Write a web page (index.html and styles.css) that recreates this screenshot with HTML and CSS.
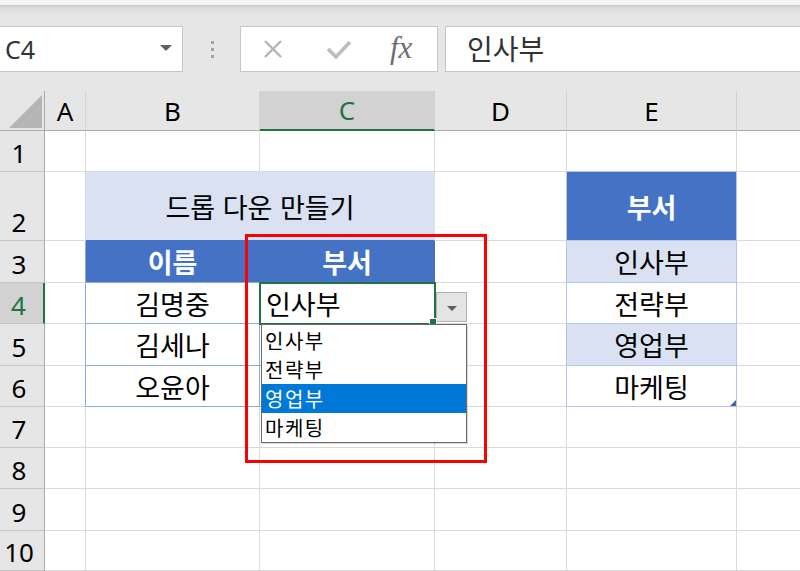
FILE: index.html
```html
<!DOCTYPE html>
<html lang="ko">
<head>
<meta charset="utf-8">
<title>드롭 다운 만들기</title>
<link rel="stylesheet" href="styles.css">
</head>
<body>
<div class="app">
  <div class="toolbar">
    <div class="namebox"><span class="name">C4</span><span class="caret"></span></div>
    <div class="grip"><i></i><i></i><i></i></div>
    <div class="btns">
      <svg class="ico-x" width="20" height="20" viewBox="0 0 20 20"><path d="M2 2 L18 18 M18 2 L2 18" stroke="#b4b4b4" stroke-width="2.4" fill="none"/></svg>
      <svg class="ico-ok" width="26" height="22" viewBox="0 0 26 22"><path d="M2 11 L10 19 L24 4" stroke="#bdbdbd" stroke-width="3.6" fill="none"/></svg>
      <span class="fx">fx</span>
    </div>
    <div class="formula">인사부</div>
  </div>

  <div class="sheet">
    <!-- header row -->
    <div class="corner"></div>
    <div class="hd">A</div>
    <div class="hd">B</div>
    <div class="hd sel">C</div>
    <div class="hd">D</div>
    <div class="hd">E</div>
    <div class="hd"></div>

    <!-- row 1 -->
    <div class="rh">1</div>
    <div class="c"></div>
    <div class="c"></div>
    <div class="c"></div>
    <div class="c"></div>
    <div class="c e-top"></div>
    <div class="c"></div>

    <!-- row 2 -->
    <div class="rh">2</div>
    <div class="c"></div>
    <div class="c title span2">드롭 다운 만들기</div>
    <div class="c e-left"></div>
    <div class="c ehead">부서</div>
    <div class="c"></div>

    <!-- row 3 -->
    <div class="rh">3</div>
    <div class="c b-left"></div>
    <div class="c thead tb-mid">이름</div>
    <div class="c thead">부서</div>
    <div class="c e-left"></div>
    <div class="c ecell band">인사부</div>
    <div class="c"></div>

    <!-- row 4 -->
    <div class="rh sel">4</div>
    <div class="c b-left"></div>
    <div class="c tcell">김명중</div>
    <div class="c tcell active">
      <span class="val">인사부</span>
      <div class="ddbtn"><span class="tri"></span></div>
      <ul class="ddlist">
        <li>인사부</li>
        <li>전략부</li>
        <li class="hi">영업부</li>
        <li>마케팅</li>
      </ul>
    </div>
    <div class="c e-left"></div>
    <div class="c ecell">전략부</div>
    <div class="c"></div>

    <!-- row 5 -->
    <div class="rh">5</div>
    <div class="c b-left"></div>
    <div class="c tcell">김세나</div>
    <div class="c tcell"></div>
    <div class="c e-left"></div>
    <div class="c ecell band">영업부</div>
    <div class="c"></div>

    <!-- row 6 -->
    <div class="rh">6</div>
    <div class="c b-left"></div>
    <div class="c tcell">오윤아</div>
    <div class="c tcell"></div>
    <div class="c e-left"></div>
    <div class="c ecell last">마케팅</div>
    <div class="c"></div>

    <!-- rows 7-10 -->
    <div class="rh">7</div>
    <div class="c"></div><div class="c"></div><div class="c"></div><div class="c"></div><div class="c"></div><div class="c"></div>
    <div class="rh">8</div>
    <div class="c"></div><div class="c"></div><div class="c"></div><div class="c"></div><div class="c"></div><div class="c"></div>
    <div class="rh">9</div>
    <div class="c"></div><div class="c"></div><div class="c"></div><div class="c"></div><div class="c"></div><div class="c"></div>
    <div class="rh">10</div>
    <div class="c"></div><div class="c"></div><div class="c"></div><div class="c"></div><div class="c"></div><div class="c"></div>

    <div class="redbox"></div>
  </div>
</div>
</body>
</html>
```

FILE: styles.css
```css
* { box-sizing: border-box; }
html, body { margin: 0; padding: 0; }
body {
  width: 800px;
  height: 571px;
  overflow: hidden;
  background: #ffffff;
  font-family: "Noto Sans", "Noto Sans CJK KR", sans-serif;
  color: #000;
}
.app { width: 800px; height: 571px; overflow: hidden; }

/* ---------- toolbar / formula bar ---------- */
.toolbar {
  height: 91px;
  display: flex;
  align-items: flex-start;
  padding-top: 26px;
  background: linear-gradient(#f4f4f4 0, #f4f4f4 5px, #cdcdcd 5px, #cdcdcd 6px, #d9d9d9 7px, #e6e6e6 15px, #e6e6e6 100%);
}
.namebox {
  width: 183px;
  height: 46px;
  background: #fff;
  border: 1px solid #c6c6c6;
  border-left: none;
  display: flex;
  align-items: center;
  justify-content: space-between;
  padding: 0 10px 0 5px;
}
.name {
  font-family: "Noto Sans", sans-serif;
  font-size: 25px;
  color: #333;
  line-height: 1;
}
.caret {
  width: 0; height: 0;
  border-left: 6px solid transparent;
  border-right: 6px solid transparent;
  border-top: 6px solid #606060;
  margin-top: -2px;
}
.grip {
  width: 57px;
  height: 46px;
  display: flex;
  flex-direction: column;
  align-items: center;
  justify-content: center;
  gap: 4px;
  padding-left: 1px;
}
.grip i {
  display: block;
  width: 3px; height: 3px;
  background: #a3a3a3;
}
.btns {
  width: 198px;
  height: 46px;
  background: #fff;
  border: 1px solid #c6c6c6;
  display: flex;
  align-items: center;
}
.ico-x { margin-left: 22px; }
.ico-ok { margin-left: 43px; }
.fx {
  margin-left: 38px;
  font-family: "Liberation Serif", serif;
  font-style: italic;
  font-size: 31px;
  color: #6e6e6e;
  line-height: 1;
  margin-top: -4px;
}
.formula {
  flex: 1;
  margin-left: 7px;
  height: 46px;
  background: #fff;
  border: 1px solid #c6c6c6;
  border-right: none;
  padding-left: 21px;
  font-family: "Noto Sans CJK KR", sans-serif;
  font-size: 28px;
  line-height: 42px;
  color: #333;
}

/* ---------- sheet grid ---------- */
.sheet {
  position: relative;
  display: grid;
  grid-template-columns: 45px 41px 174px 175px 132px 170px 136px;
  grid-template-rows: 40px 41px 69px 42px 41px 42px 41px 41px 41px 42px 40px;
}
.corner {
  background: #e6e6e6;
  border-right: 1px solid #ababab;
  border-bottom: 1px solid #ababab;
  position: relative;
}
.corner::after {
  content: "";
  position: absolute;
  left: 9px; top: 4px;
  width: 33px; height: 33px;
  background: #b5b5b5;
  clip-path: polygon(0 100%, 100% 100%, 100% 0);
}
.hd {
  background: #e6e6e6;
  border-right: 1px solid #d2d2d2;
  border-bottom: 1px solid #ababab;
  display: flex;
  align-items: center;
  justify-content: center;
  font-family: "Noto Sans", sans-serif;
  font-size: 26px;
  color: #000;
}
.hd.sel {
  background: #d2d2d2;
  color: #217346;
  border-bottom: 2px solid #217346;
}
.rh {
  background: #e6e6e6;
  border-right: 1px solid #ababab;
  border-bottom: 1px solid #c4c4c4;
  display: flex;
  align-items: flex-end;
  justify-content: center;
  padding: 0 6px 2px 0;
  font-family: "Noto Sans", sans-serif;
  font-size: 26px;
  line-height: 1.2;
  color: #000;
}
.rh.sel {
  background: #d2d2d2;
  color: #217346;
  border-right: 2px solid #217346;
}

.c {
  border-right: 1px solid #dadada;
  border-bottom: 1px solid #dadada;
  display: flex;
  align-items: center;
  justify-content: center;
  font-family: "Noto Sans CJK KR", sans-serif;
  font-size: 27px;
  color: #000;
  position: relative;
}
.span2 { grid-column: span 2; }
.title {
  background: #d9e1f2;
  border-right-color: #d9e1f2;
  border-bottom-color: #4472c4;
}
.thead {
  background: #4472c4;
  color: #fff;
  font-weight: 700;
  border-right-color: #4472c4;
  border-bottom-color: #8eaadb;
}
.tb-mid { border-right-color: #4472c4; }
.tcell {
  border-bottom-color: #8eaadb;
  border-right-color: #8eaadb;
}
.b-left { border-right-color: #8eaadb; }

.e-top { border-bottom-color: #b4c6e7; }
.e-left { border-right-color: #b4c6e7; }
.ehead {
  background: #4472c4;
  color: #fff;
  font-weight: 700;
  border-right-color: #b4c6e7;
  border-bottom-color: #b4c6e7;
}
.ecell {
  border-right-color: #b4c6e7;
  border-bottom-color: #b4c6e7;
}
.ecell.band { background: #d9e1f2; }
.ecell.last::after {
  content: "";
  position: absolute;
  right: 0; bottom: 0;
  width: 6px; height: 6px;
  background: #4262b8;
  clip-path: polygon(0 100%, 100% 100%, 100% 0);
}

/* active cell + dropdown */
.active {
  justify-content: flex-start;
  padding-left: 6px;
  outline: 2px solid #217346;
  outline-offset: -1px;
  z-index: 3;
}
.active::after {
  content: "";
  position: absolute;
  right: -3px; bottom: -3px;
  width: 6px; height: 6px;
  background: #217346;
  border: 1px solid #fff;
}
.ddbtn {
  position: absolute;
  left: 176px;
  top: 9px;
  width: 31px;
  height: 30px;
  background: #e4e4e4;
  border: 1px solid #b2b2b2;
  display: flex;
  align-items: center;
  justify-content: center;
}
.tri {
  width: 0; height: 0;
  border-left: 5px solid transparent;
  border-right: 5px solid transparent;
  border-top: 5px solid #5f5f5f;
  margin-top: 2px;
}
.ddlist {
  position: absolute;
  left: 1px;
  top: 41px;
  width: 206px;
  height: 119px;
  margin: 0;
  padding: 1px 0 0;
  list-style: none;
  background: #fff;
  border: 1px solid #6a6a6a;
  box-shadow: 1px 1px 0 rgba(0,0,0,0.15);
  z-index: 4;
}
.ddlist li {
  height: 29px;
  line-height: 29px;
  padding-left: 3px;
  font-family: "Noto Sans CJK KR", sans-serif;
  font-size: 20px;
  letter-spacing: 1.5px;
  color: #000;
}
.ddlist li.hi {
  background: #0078d7;
  color: #fff;
}

.redbox {
  position: absolute;
  left: 245px;
  top: 143px;
  width: 242px;
  height: 229px;
  border: 3px solid #ff0000;
  z-index: 5;
  pointer-events: none;
}
```
